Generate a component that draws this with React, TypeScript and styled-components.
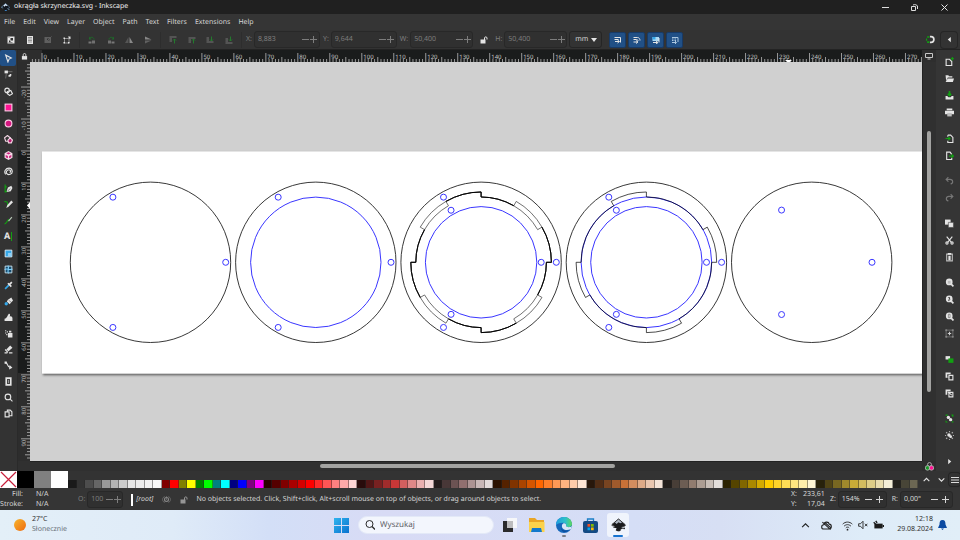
import React, { useEffect, useState } from "react";
import styled, { createGlobalStyle } from "styled-components";

const GlobalStyle = createGlobalStyle`
  *, *::before, *::after { box-sizing: border-box; }
  html, body { margin: 0; height: 100%; overflow: hidden; }
  body {
    font: 7px/10px "Noto Sans", "Open Sans", sans-serif;
    color: #d6d6d6;
    background: #333;
    text-rendering: geometricPrecision;
  }
  button, input, select { font: inherit; color: inherit; margin: 0; padding: 0; border: 0; background: none; text-rendering: inherit; }
  svg { display: block; flex: none; }
`;

/* ---------- icons ---------- */

const W = "#e4e4e4";
const G = "#12a012";
const P = "#ff1493";
const B = "#35a7e8";

const line = (d: string, stroke = W, width = 2) => (
  <path d={d} stroke={stroke} strokeWidth={width} fill="none" />
);
const solid = (d: string, fill = W) => <path d={d} fill={fill} />;

const rotate = (
  <>
    {solid("M2 9h6v6H2z", "#707070")}
    {solid("M9 11h6v4H9z", "#777")}
    {line("M4 7C4 3 9 1 12 4", "#1f6b2a", 2)}
    {solid("M14 1v6H9z", "#1f6b2a")}
  </>
);
const order = (up: boolean, edge: boolean) => (
  <>
    {line(edge ? (up ? "M1 2h14M1 6h5M1 10h5" : "M1 14h14M1 10h5M1 6h5") : up ? "M1 4h14M1 8h5M1 12h5" : "M1 12h14M1 8h5M1 4h5", "#777", 2)}
    {line(up ? "M11 15V6M8 9l3-3 3 3" : "M11 1v9M8 7l3 3 3-3", "#237a2d", 2)}
  </>
);
const zoomBase = (
  <>
    <circle cx="7.5" cy="7" r="6" fill={W} />
    {line("M11 11l4 4", W, 3)}
  </>
);

const icons: Record<string, React.ReactNode> = {
  selectAll: (<>{solid("M1 1h14v14H1z")}{solid("M7 4h5v5H7zM4 8l4 4H4z", "#333")}{line("M3 3h2M3 13h8", "#333", 1)}</>),
  selectLayers: (<>{solid("M2 0h12v16H2z")}{line("M4 3h8M4 6h8M4 9h8M4 12h8", "#444", 1)}</>),
  deselect: (<g opacity="0.25">{solid("M1 2h13v12H1z")}{solid("M6 5h5v4H6z", "#333")}{line("M2 14L15 1")}</g>),
  touch: (<>{line("M3 5h9v9H3z", W, 1)}{solid("M1 3h3v3H1zM1 12h3v3H1zM10 12h3v3h-3z")}{solid("M10 1h5v5h-2z")}</>),
  rotateLeft: <g transform="matrix(-1 0 0 1 16 0)">{rotate}</g>,
  rotateRight: rotate,
  flipH: (<>{solid("M7 2v12H0z", "#555")}{solid("M9 2v12h7z", "#888")}</>),
  flipV: (<>{solid("M2 1v6h13z", "#888")}{solid("M2 9v6l13-6z", "#606060")}</>),
  raiseTop: order(true, true),
  raise: order(true, false),
  lower: order(false, false),
  lowerBottom: order(false, true),
  unlock: (<>{solid("M1 7h10v8H1z")}{line("M9 8V4c0-3 5-3 5 0v3")}</>),
  lock: (<>{solid("M2 7h12v8H2z")}{line("M5 8V4c0-4 6-4 6 0v4")}</>),
  scaleStroke: (<>{line("M1 3h12v10M1 7h8")}{line("M2 11h8M7 8l4 3-4 3")}</>),
  scaleCorner: (<>{line("M1 3h8c3 0 5 3 5 6M1 7h6c2 0 3 1 3 3")}{line("M1 12h7M6 9l4 3-4 3")}</>),
  moveGradient: (<>{solid("M1 2h13v8H1z", "#a9d9f5")}{solid("M1 2h6v5H1z", B)}{line("M2 13h9M8 10l4 3-4 3M14 4v9")}</>),
  movePattern: (<>{line("M2 3h12v9M2 6h3M7 6h3M2 9h3M7 9h3", "#aac6df", 2)}{line("M2 13h8M8 10l3 3-3 3", "#aac6df")}</>),
  snap: (<>{line("M7 3h2a5 5 0 010 10H7", W, 3)}{solid("M2 2h4v3H2zM2 11h4v3H2zM0 6h2v4H0z", G)}</>),
  triLeft: solid("M11 2v12L4 8z"),
  triRight: solid("M5 2v12l7-6z"),
  display: (<>{line("M1 3h14v8H1z", "#c8c8c8", 2)}{solid("M5 13h6v2H5z", "#c8c8c8")}</>),
  arrow: line("M3 2l10 5-4 2-2 5z"),
  node: (<>{solid("M1 1h6v5H1z")}{line("M4 6c0 4-1 6-1 9M7 3h8", "#999", 1)}{solid("M10 7h3v3h-3zM8 9h4v3H8z")}</>),
  builder: (<><circle cx="5.5" cy="6" r="4" fill="none" stroke={W} strokeWidth="2" />{line("M6 8l6-2 3 6-5 3-4-3z")}</>),
  rect: (<rect x="2" y="2" width="12" height="12" fill={P} stroke="#ffc9e5" strokeWidth="2" />),
  ellipse: (<circle cx="8" cy="8" r="6" fill="#d51680" stroke="#ffc9e5" strokeWidth="2" />),
  star: (<>{line("M6 1l5 4-2 6H3L1 5z", "#f3d6e4", 2)}<path d="M7 9l4-4 4 4-2 5H8z" fill="#b81b6f" stroke="#f3d6e4" strokeWidth="2" /></>),
  box3d: (<>{solid("M8 0l7 4v8l-7 4-7-4V4z", "#f6dbe8")}{solid("M8 2l4 2-4 2-4-2zM3 7l4 2v4l-4-2zM13 7L9 9v4l4-2z", "#cc2680")}</>),
  spiral: line("M3 13C-1 8 3 2 9 2s8 9 2 11-9-4-5-7 8 2 4 4", W, 2),
  pen: (<>{line("M2 1v4h3M2 6v8c3 0 5-2 5-5", G, 2)}<path d="M5 12l2-6 6-3 2 4-3 6-7 1z" fill={W} />{line("M6 13l5-5", "#333", 1)}</>),
  pencil: (<>{line("M1 2c2 3 4-1 5 3s1 5 0 7", G, 2)}{solid("M4 14l2-5 7-8 3 3-8 8z")}</>),
  calligraphy: (<>{line("M1 14c4 0 4-6 8-8", G, 2)}{line("M8 9l6-7", "#b9c9b9", 2)}</>),
  gradient: (<><path d="M2 2h12v12H2z" fill={B} stroke="#eaf6fd" strokeWidth="1.5" />{solid("M7 7h6v6H7z", "#8fd0f5")}</>),
  mesh: (<><path d="M2 2h12v12H2z" fill="#164d70" stroke="#d5effb" strokeWidth="1.5" />{line("M7 1c3 5-2 9 1 14M1 8c5-3 9 2 14-1", "#7fd0fa", 2)}</>),
  dropper: (<>{line("M2 14l7-7", B, 3)}{line("M7 4l6 6M9 7l5-5", W, 3)}</>),
  bucket: (<>{solid("M7 5l6-4 3 5-6 7-5-5z")}<circle cx="4" cy="12" r="3" fill={B} />{line("M9 6l4 4", "#333", 1)}</>),
  tweak: solid("M1 14v-4c4 0 5-6 7-8s4 1 2 4c3-1 5 1 5 3v5z"),
  spray: (<>{solid("M7 7h8v8H7zM9 3h4v3H9z")}{solid("M2 2h2v2H2zM5 4h2v2H5zM2 6h2v2H2zM4 9h2v2H4z")}</>),
  eraser: (<>{solid("M4 8l7-7 4 4-7 6z")}{line("M2 8l5 5M1 14h5M9 14h6")}</>),
  connector: (<>{line("M2 3c6-1 2 8 9 8")}{solid("M1 1h4v4H1zM10 7l5 5-6 3z")}</>),
  measure: (<>{line("M4 2h8v12H4z", W, 3)}{line("M8 5v6", W, 1)}</>),
  magnifier: (<><circle cx="7" cy="7" r="5" fill="none" stroke={W} strokeWidth="2" />{line("M11 11l4 4")}</>),
  pages: (<>{line("M2 5h7v9H2z")}{line("M6 5V2h5l3 3v7h-5")}</>),
  docNew: (<>{line("M2 4h6l4 4v7H2z")}{line("M13 0v6M10 3h6", G, 2)}</>),
  open: solid("M1 2h5l1 2h6v2H5l-3 6zM5 8h11l-2 6H1z"),
  save: (<>{solid("M1 9h3l2 2h4l2-2h3v6H1z")}{line("M8 0v7M5 5l3 3 3-3", G, 3)}</>),
  print: (<>{solid("M3 1h10v3H3zM0 5h16v6H0z")}{solid("M4 9h8v6H4z", "#bbb")}</>),
  importDoc: (<>{line("M5 2h5l4 4v9H5v-3M5 2v3")}{line("M1 8h8M6 5l3 3-3 3", G, 2)}</>),
  exportDoc: (<>{line("M12 6L9 2H3v13h9v-3")}{line("M7 9h7M12 6l3 3-3 3", G, 2)}</>),
  undo: line("M6 2L2 6l4 4M2 6h7c6 0 6 7 1 8", "#777", 2),
  redo: line("M10 2l4 4-4 4M14 6H7c-6 0-6 7-1 8", "#777", 2),
  copy: (<>{solid("M0 1h10v9H0z")}<path d="M6 6h9v9H6z" fill={W} stroke="#444" /></>),
  cut: (<>{line("M3 1l8 10M13 1L5 11")}<circle cx="3.5" cy="12.5" r="2" fill="none" stroke={W} strokeWidth="2" /><circle cx="12.5" cy="12.5" r="2" fill="none" stroke={W} strokeWidth="2" /></>),
  paste: (<>{line("M3 2h10v12H3z", "#bbb", 2)}{solid("M5 0h6v3H5zM6 5h4v8H6z")}</>),
  zoomSel: (<>{zoomBase}{solid("M5 5h5v5H5z", "#bbb")}</>),
  zoomDraw: (<>{zoomBase}{solid("M5 4h4v4zM6 8h4l-4 3z", "#333")}</>),
  zoomPage: (<>{zoomBase}{line("M6 4h3v6H6z", "#555", 1)}</>),
  zoomCenter: (<>{line("M2 2h12v12H2z", "#999", 1)}{line("M8 5v6M5 8h6", "#ccc", 2)}{line("M0 2h4M2 0v4M12 2h4M14 0v4M0 14h4M2 12v4M12 14h4M14 12v4", "#999", 1)}</>),
  duplicate: (<>{solid("M1 2h8v6H1z")}{solid("M6 6h9v8H6z", G)}</>),
  clone: (<>{solid("M1 1h9v3H4v6H1z")}{line("M7 6h7v8H7z")}{line("M3 9h5", W, 1)}</>),
  unlinkClone: (<>{solid("M1 1h9v3H4v6H1z")}{line("M7 6h7v8H7z")}{line("M5 5l7 6", W, 2)}</>),
  group: (<>{solid("M1 1h4v2H1zM11 1h4v4h-2zM1 11l4 4H1zM12 13h3v2h-3z", G)}<circle cx="6" cy="6" r="3" fill={W} /><circle cx="10" cy="10" r="3" fill={W} /></>),
  ungroup: (<>{line("M2 2l2 2M14 2l-2 2M2 14l2-2M14 14l-2-2M8 0v2M8 14v2M0 8h2M14 8h2", "#aaa", 2)}<circle cx="7" cy="7" r="3" fill={W} /><circle cx="10" cy="10" r="2.5" fill={W} /></>),
  cms: (<><circle cx="8" cy="4.5" r="3.5" fill="none" stroke="#bbb" strokeWidth="1.5" /><circle cx="4.5" cy="10.5" r="4" fill="#179b28" stroke="#bbb" strokeWidth="1.5" /><circle cx="11.5" cy="10.5" r="4" fill={P} stroke="#bbb" strokeWidth="1.5" /></>),
  eye: (<><circle cx="8" cy="8" r="3.5" fill="none" stroke="#888" strokeWidth="2" />{line("M1 8c0-3 2-5 4-5M15 8c0-3-2-5-4-5M1 8c0 3 2 5 4 5M15 8c0 3-2 5-4 5M8 2v7", "#888", 1)}</>),
  chevUp: line("M3 11l5-5 5 5"),
  chevDown: line("M3 6l5 5 5-5"),
  burger: line("M0 3h16M0 8h16M0 13h16", "#ddd", 2),
};

const Icon = ({ name, size = 9 }: { name: string; size?: number }) => (
  <svg width={size} height={size} viewBox="0 0 16 16" aria-hidden="true">{icons[name]}</svg>
);

/* ---------- shared parts ---------- */

const Spacer = styled.div`flex: 1;`;

const IconButton = styled.button<{ $w?: number; $h?: number; $framed?: boolean }>`
  display: flex;
  align-items: center;
  justify-content: center;
  flex: none;
  width: ${(p) => p.$w ?? 16}px;
  height: ${(p) => p.$h ?? 16}px;
  border-radius: 3px;
  box-shadow: ${(p) => (p.$framed ? "0 0 0 1px #262626" : "none")};
`;

/* ---------- window chrome ---------- */

const AppWindow = styled.div`
  display: flex;
  flex-direction: column;
  height: 100vh;
`;

const TitleBar = styled.header`
  display: flex;
  align-items: center;
  height: 14px;
  padding-left: 1px;
  background: #202020;
  color: #f2f2f2;
`;

const Title = styled.h1`
  flex: 1;
  margin: 0 0 0 4px;
  font-size: 7px;
  font-weight: 400;
`;

const MenuBar = styled.nav`
  display: flex;
  align-items: center;
  gap: 8px;
  height: 16px;
  padding: 1px 0 0 4px;
  background: #353535;
`;

const MenuItem = styled.button`white-space: nowrap;`;

const ToolBar = styled.div`
  display: flex;
  align-items: center;
  height: 20px;
  padding: 0 3px 0 3px;
  background: #333;
  border-bottom: 1px solid #232323;
`;

const ToolGroup = styled.div`
  display: flex;
  justify-content: space-between;
  flex: none;
  width: 77px;
  padding-right: 4px;
  margin-right: 4px;
  border-right: 1px solid #2d2d2d;
`;

const Field = styled.label<{ $dim?: boolean }>`
  display: flex;
  align-items: center;
  flex: none;
  gap: 2px;
  color: ${(p) => (p.$dim ? "#7d7d7d" : "#d6d6d6")};
`;

const SpinBox = styled.span<{ $w: number }>`
  display: flex;
  align-items: center;
  width: ${(p) => p.$w}px;
  height: 17px;
  padding: 0 1px 0 3px;
  border: 1px solid #282828;
  border-radius: 3px;
  background: #303030;
`;

const SpinInput = styled.input`
  flex: 1;
  min-width: 0;
  width: 0;
  outline: none;
`;

const Step = styled.button<{ $w: number }>`
  display: flex;
  align-items: center;
  justify-content: center;
  width: ${(p) => p.$w}px;
  height: 14px;
`;

const FieldGap = styled.div<{ $w: number }>`width: ${(p) => p.$w}px; flex: none;`;

const UnitSelect = styled.span`
  display: flex;
  align-items: center;
  gap: 1px;
  width: 33px;
  height: 17px;
  padding-left: 5px;
  margin-right: 7px;
  border: 1px solid #252525;
  border-radius: 3px;
  select { appearance: none; width: 15px; outline: none; }
`;

const Toggle = styled.button`
  display: flex;
  align-items: center;
  justify-content: center;
  width: 17px;
  height: 16px;
  margin-right: 2px;
  border-radius: 2px;
  border: 1px solid #183a66;
  background: #215086;
`;

function Spin({ label, value, width, dim }: { label: string; value: string; width: number; dim?: boolean }) {
  const step = dim ? 8 : 11;
  return (
    <Field $dim={dim}>
      {label}
      <SpinBox $w={width}>
        <SpinInput defaultValue={value} aria-label={label} />
        <Step $w={step} aria-label="Decrease"><svg width="7" height="7" viewBox="0 0 7 7"><path d="M0 3.5h7" stroke="currentColor" /></svg></Step>
        <Step $w={step} aria-label="Increase"><svg width="7" height="7" viewBox="0 0 7 7"><path d="M0 3.5h7M3.5 0v7" stroke="currentColor" /></svg></Step>
      </SpinBox>
    </Field>
  );
}

/* ---------- work area ---------- */

const WorkArea = styled.main`
  display: grid;
  grid-template-columns: 18px 12px minmax(0, 1fr) 14px 24px;
  grid-template-rows: 12px minmax(0, 1fr) 10px;
  flex: 1;
  min-height: 0;
  background: #303030;
`;

const ToolBox = styled.div`
  grid-column: 1;
  grid-row: 1 / -1;
  display: flex;
  flex-direction: column;
  gap: 1px;
  background: #333;
  border-right: 1px solid #2a2a2a;
`;

const ToolSet = styled.div`
  display: flex;
  flex-direction: column;
`;

const Tool = styled.button<{ $active?: boolean }>`
  display: flex;
  align-items: center;
  justify-content: center;
  width: 16px;
  height: 16px;
  border-radius: 2px;
  background: ${(p) => (p.$active ? "#215086" : "none")};
`;

const TextGlyph = styled.span`
  font-size: 9px;
  line-height: 14px;
  font-weight: 700;
  color: ${W};
`;

const TextCaret = styled.span`
  width: 1px;
  height: 9px;
  margin-left: 1px;
  background: ${G};
`;

const Corner = styled.button<{ $col: number; $row: number }>`
  grid-column: ${(p) => p.$col};
  grid-row: ${(p) => p.$row};
  display: flex;
  align-items: center;
  justify-content: center;
  background: #2e2e2e;
  border-radius: 2px;
`;

const RulerH = styled.div`
  grid-column: 3;
  grid-row: 1;
  overflow: hidden;
  background: linear-gradient(to right, #2d2d2d 12px, #1a1c1c 12px);
`;

const RulerV = styled.div`
  grid-column: 2;
  grid-row: 2;
  overflow: hidden;
  background: linear-gradient(to bottom, #2d2d2d 89px, #1a1c1c 89px, #1a1c1c 311px, #2d2d2d 311px);
`;

const Canvas = styled.div`
  grid-column: 3;
  grid-row: 2;
  overflow: hidden;
  background: #d0d0d0;
`;

const ScrollV = styled.div`
  grid-column: 4;
  grid-row: 2;
  display: flex;
  flex-direction: column;
  align-items: center;
  padding: 69px 2px 0 0;
  border-left: 1px solid #222;
`;

const ScrollH = styled.div`
  grid-column: 3;
  grid-row: 3;
  padding: 2px 0 0 290px;
  border-top: 1px solid #222;
`;

const Thumb = styled.div<{ $w: string; $h: string }>`
  width: ${(p) => p.$w};
  height: ${(p) => p.$h};
  border-radius: 2px;
  background: #a3a3a1;
`;

const CommandBar = styled.div`
  grid-column: 5;
  grid-row: 1 / -1;
  display: flex;
  flex-direction: column;
  justify-content: space-between;
  align-items: center;
  padding: 3px 0 1px 2px;
  background: #353535;
`;

const Commands = styled.div`
  display: flex;
  flex-direction: column;
`;

const SCALE = 3.198;
const ORIGIN_X = 12;
const ORIGIN_Y = 89;
const tickFill = "#a8a8a8";

const tickLength = (i: number) => (i % 10 === 0 ? 9 : i % 5 === 0 ? 5 : 3);

function useWindowSize() {
  const read = () => ({ width: window.innerWidth, height: window.innerHeight });
  const [size, setSize] = useState(read);
  useEffect(() => {
    const update = () => setSize(read());
    window.addEventListener("resize", update);
    return () => window.removeEventListener("resize", update);
  }, []);
  return size;
}

const range = (from: number, to: number) => Array.from({ length: Math.max(0, to - from + 1) }, (_, k) => from + k);

function HorizontalTicks({ length }: { length: number }) {
  return (
    <svg width="100%" height="12">
      {range(-3, Math.floor((length - ORIGIN_X) / SCALE)).map((i) => {
        const x = ORIGIN_X + i * SCALE;
        return (
          <g key={i}>
            <path d={`M${x} 12V${12 - tickLength(i)}`} stroke={tickFill} strokeWidth="0.9" />
            {i % 10 === 0 && x + 14 < length && <text x={x + 1.5} y="9" fontSize="6" fill="#c4c4c4">{i}</text>}
          </g>
        );
      })}
      <path d="M755 10h7l-3.500 3z" fill="#fff" />
    </svg>
  );
}

function VerticalTicks({ length }: { length: number }) {
  return (
    <svg width="12" height="100%">
      {range(-27, Math.floor((length - ORIGIN_Y) / SCALE)).map((i) => {
        const y = ORIGIN_Y + i * SCALE;
        const end = y + 1 + String(i).length * 3.4;
        return (
          <g key={i}>
            <path d={`M12 ${y}H${12 - tickLength(i)}`} stroke={tickFill} strokeWidth="0.9" />
            {i % 10 === 0 && end < length && (
              <text transform={`translate(8 ${end}) rotate(-90)`} fontSize="6" fill="#b4b4b4">{i}</text>
            )}
          </g>
        );
      })}
      <path d="M9 140v7l3-3.500z" transform="matrix(-1 0 0 1 21 0)" fill="#fff" />
    </svg>
  );
}

/* ---------- drawing ---------- */

const OUT = 70.3;
const IN = 65.3;

const at = (r: number, deg: number) => {
  const a = (deg * Math.PI) / 180;
  return `${(r * Math.cos(a)).toFixed(2)} ${(r * Math.sin(a)).toFixed(2)}`;
};
const arc = (r: number, to: number) => `A${r} ${r} 0 0 1 ${at(r, to)}`;

/* Bayonet ring: each quadrant runs on the inner radius, then steps out for the lug. */
const ringPath = (lugStart: number) =>
  [0, 90, 180, 270]
    .map((q, n) => `${n ? "L" : "M"}${at(IN, q)} ${arc(IN, q + lugStart)} L${at(OUT, q + lugStart)} ${arc(OUT, q + 90)}`)
    .join(" ") + "Z";

const sharedPath = [0, 90, 180, 270]
  .map((q) => `M${at(OUT, q - 30)} ${arc(OUT, q)} L${at(IN, q)} ${arc(IN, q + 30)}`)
  .join(" ");

const BLUE = "#3a36ff";

const Ring = ({ r }: { r: number }) => <circle r={r} fill="none" stroke={BLUE} strokeWidth="1" />;

const Holes = ({ r }: { r: number }) => (
  <>
    {[0, 120, 240].map((a) => (
      <g key={a} transform={`translate(${at(r, a)})`}>
        <circle r="3" fill="none" stroke={BLUE} strokeWidth="1" />
      </g>
    ))}
  </>
);

const Disc = ({ x, children }: { x: number; children: React.ReactNode }) => (
  <g transform={`translate(${x} 200.300)`}>
    <circle r="80.200" fill="none" stroke="#222" strokeWidth="0.9" />
    {children}
  </g>
);

function Drawing() {
  return (
    <svg width="100%" height="100%" role="img" aria-label="Round box parts">
      <defs>
        <filter id="pageShadow" x="-5%" y="-5%" width="110%" height="115%">
          <feDropShadow dx="1" dy="1.500" stdDeviation="1.200" floodColor="#000" floodOpacity="0.6" />
        </filter>
      </defs>
      <rect x="12" y="89.500" width="4000" height="222" fill="#fff" filter="url(#pageShadow)" />
      <Disc x={120.5}><Holes r={75.2} /></Disc>
      <Disc x={285.8}><Ring r={65.2} /><Holes r={75.2} /></Disc>
      <Disc x={451.1}>
        <Ring r={55.7} />
        <Holes r={75.2} />
        <Holes r={60.1} />
        <path d={ringPath(30)} fill="none" stroke="#333" strokeWidth="0.7" />
        <path d={ringPath(60)} fill="none" stroke="#333" strokeWidth="0.7" />
        <path d={sharedPath} fill="none" stroke="#000" strokeWidth="1" />
      </Disc>
      <Disc x={616.4}>
        <Ring r={IN} />
        <path d={ringPath(60)} fill="none" stroke="#000" strokeWidth="0.7" />
        <Ring r={55.7} />
        <Holes r={75.2} />
        <Holes r={60.1} />
      </Disc>
      <Disc x={781.7}><Holes r={60.3} /></Disc>
    </svg>
  );
}

/* ---------- palette and status ---------- */

const PaletteBar = styled.div`
  display: flex;
  align-items: flex-end;
  height: 17px;
  background: #333;
`;

const BigSwatch = styled.button<{ $c: string }>`
  width: 17px;
  height: 17px;
  flex: none;
  background: ${(p) => p.$c};
`;

const SwatchRow = styled.div`
  display: flex;
  flex: 1;
  height: 8px;
`;

const Swatch = styled.button<{ $c: string }>`
  flex: 1;
  min-width: 0;
  background: ${(p) => p.$c};
  border-right: 1px solid rgba(40, 40, 40, 0.45);
`;

const PaletteTools = styled.div`
  display: flex;
  align-items: center;
  height: 17px;
`;

const palette = (
  "1a1a1a 333333 4d4d4d 666666 999999 b3b3b3 cccccc e6e6e6 ececec f2f2f2 f9f9f9 " +
  "800000 ff0000 808000 ffff00 008000 00ff00 008080 00ffff 000080 0000ff 800080 ff00ff " +
  "2b0000 550000 800000 aa0000 d40000 ff0000 ff2a2a ff5555 ff8080 ffaaaa ffd5d5 " +
  "280b0b 501616 782121 a02c2c c83737 d35f5f de8787 e9afaf f4d7d7 " +
  "241c1c 483737 6c5353 916f6f ac9393 c8b7b7 e3dbdb " +
  "2b1100 552200 803300 aa4400 d45500 ff6600 ff7f2a ff9955 ffb380 ffccaa ffe6d5 " +
  "28170b 502d16 784421 a05a2c c87137 d38d5f deaa87 e9c6af f4e3d7 " +
  "241f1c 483e37 6c5d53 917c6f ac9d93 c8beb7 e3dedb " +
  "2b2200 554400 806600 aa8800 d4aa00 ffcc00 ffd42a ffdd55 ffe680 ffeeaa fff6d5 " +
  "28220b 504416 786721 a0892c c8ab37 d3bc5f decd87 e9ddaf f4eed7 24221c 484537 6c6753"
).split(" ");

const StatusBar = styled.footer`
  display: flex;
  align-items: center;
  height: 22px;
  padding: 1px 7px 0 0;
  background: #353535;
`;

const Pairs = styled.dl<{ $w: number; $label: number; $right?: boolean }>`
  display: grid;
  grid-template-columns: ${(p) => p.$label}px 1fr;
  column-gap: ${(p) => (p.$right ? 0 : 13)}px;
  width: ${(p) => p.$w}px;
  flex: none;
  margin: 0;
  white-space: nowrap;
  dt { text-align: ${(p) => (p.$right ? "left" : "right")}; }
  dd { margin: 0; text-align: ${(p) => (p.$right ? "right" : "left")}; }
`;

const LayerName = styled.button`
  height: 12px;
  margin: 0 4px 0 8px;
  padding-left: 3px;
  border-left: 2px solid #fff;
  font-style: italic;
`;

const Message = styled.p`
  flex: 1;
  margin: 0 0 0 3px;
  white-space: nowrap;
  overflow: hidden;
`;

/* ---------- desktop task bar ---------- */

const TaskBar = styled.div`
  display: grid;
  grid-template-columns: 1fr auto 1fr;
  align-items: center;
  height: 30px;
  color: #333;
  background: linear-gradient(to right, #e3eff8 0%, #dfebf8 18%, #d3dff7 28%, #d8dbf5 40%, #d5def6 66%, #d7dff4 75%, #deecf8 90%, #e1eef8 100%);
`;

const Weather = styled.button`
  display: flex;
  align-items: center;
  gap: 6px;
  padding-left: 14px;
  text-align: left;
  justify-self: start;
`;

const Muted = styled.span`display: block; color: #6a7178;`;

const Pinned = styled.div`
  display: flex;
  align-items: center;
  height: 30px;
`;

const SearchBox = styled.label`
  display: flex;
  align-items: center;
  gap: 5px;
  width: 136px;
  height: 18px;
  margin: 0 2px 0 6px;
  padding-left: 6px;
  border-radius: 9px;
  background: #f3f6fd;
  border: 1px solid #e3e9f7;
  input { width: 100px; font-size: 8px; outline: none; }
  input::placeholder { color: #5d6066; opacity: 1; }
`;

const StartButton = styled.button`
  display: flex;
  align-items: center;
  justify-content: center;
  width: 21px;
  height: 24px;
`;

const TaskButton = styled.button<{ $active?: boolean; $mark?: string }>`
  position: relative;
  display: flex;
  align-items: center;
  justify-content: center;
  width: ${(p) => (p.$active ? 22 : 27)}px;
  height: 24px;
  border-radius: 3px;
  background: ${(p) => (p.$active ? "#f0f4fc" : "none")};
  &::after {
    content: "";
    display: ${(p) => (p.$mark ? "block" : "none")};
    position: absolute;
    bottom: 0;
    width: ${(p) => (p.$active ? 10 : 4)}px;
    height: 2px;
    border-radius: 1px;
    background: ${(p) => p.$mark ?? "none"};
  }
`;

const Tray = styled.div`
  display: flex;
  align-items: center;
  justify-self: end;
  gap: 5px;
  padding-right: 13px;
`;

const Clock = styled.div`
  width: 44px;
  text-align: right;
`;

const InkscapeLogo = ({ size, dark }: { size: number; dark?: boolean }) => (
  <svg width={size} height={size} viewBox="0 0 16 16" aria-hidden="true">
    <path d="M8 1l7 6c1 2-2 2-4 3l3 1-4 1c0 2-3 3-5 1l1-2-4-1 2-1C2 8 0 8 1 7z" fill={dark ? "#1b1b1d" : "#11161e"} />
    <path d="M8 1l4 3.500-2 1-2-1-2 2-2-2z" fill={dark ? "#aeb6c2" : "#dcebfa"} />
    <path d="M8 1l7 6c1 2-2 2-4 3M1 7l7-6" stroke={dark ? "#333" : "#6c93bb"} strokeWidth="1" fill="none" />
    <path d="M2 6l-1 2 3 1" stroke={dark ? "#444" : "#8fbbe4"} strokeWidth="1" fill="none" />
    <circle cx="14" cy="11" r="1" fill={dark ? "#222" : "#8fbbe4"} />
    <path d="M6 12c2 1 3 0 5 0-1 3-4 3-5 0z" fill={dark ? "#222" : "#3f88cc"} />
  </svg>
);

const menus = ["File", "Edit", "View", "Layer", "Object", "Path", "Text", "Filters", "Extensions", "Help"];

const toolbarGroups = [
  ["selectAll", "selectLayers", "deselect", "touch"],
  ["rotateLeft", "rotateRight", "flipH", "flipV"],
  ["raiseTop", "raise", "lower", "lowerBottom"],
];

const toolSets = [
  ["arrow", "node"],
  ["builder", "rect", "ellipse", "star", "box3d", "spiral"],
  ["pen", "pencil", "calligraphy", "text"],
  ["gradient", "mesh", "dropper", "bucket", "tweak", "spray", "eraser", "connector", "measure", "magnifier", "pages"],
];

const commandSets = [
  ["docNew", "open", "save", "print"],
  ["importDoc", "exportDoc"],
  ["undo", "redo"],
  ["copy", "cut", "paste"],
  ["zoomSel", "zoomDraw", "zoomPage", "zoomCenter"],
  ["duplicate", "clone", "unlinkClone"],
  ["group", "ungroup"],
  ["triRight"],
];

export default function App() {
  const { width, height } = useWindowSize();
  return (
    <AppWindow>
      <GlobalStyle />
      <TitleBar>
        <InkscapeLogo size={9} />
        <Title>okrągła skrzyneczka.svg - Inkscape</Title>
        <IconButton $w={29} $h={14} aria-label="Minimize"><svg width="7" height="7" viewBox="0 0 7 7"><path d="M0 3.500h7" stroke="#ddd" /></svg></IconButton>
        <IconButton $w={29} $h={14} aria-label="Restore"><svg width="7" height="7" viewBox="0 0 7 7"><path d="M.5 2.500h4v4h-4zM2 1c2-1 4 0 4.500 1v3" stroke="#ddd" fill="none" /></svg></IconButton>
        <IconButton $w={31} $h={14} aria-label="Close"><svg width="7" height="7" viewBox="0 0 7 7"><path d="M.5.5l6 6M6.500.5l-6 6" stroke="#e6e6e6" /></svg></IconButton>
      </TitleBar>

      <MenuBar>{menus.map((m) => <MenuItem key={m}>{m}</MenuItem>)}</MenuBar>

      <ToolBar>
        {toolbarGroups.map((g) => (
          <ToolGroup key={g[0]}>
            {g.map((n) => <IconButton key={n} aria-label={n}><Icon name={n} size={8} /></IconButton>)}
          </ToolGroup>
        ))}
        <Spin dim label="X:" value="8,883" width={66} />
        <FieldGap $w={3} />
        <Spin dim label="Y:" value="9,644" width={66} />
        <FieldGap $w={3} />
        <Spin dim label="W:" value="50,400" width={63} />
        <FieldGap $w={3} />
        <IconButton aria-label="Lock ratio"><Icon name="unlock" size={8} /></IconButton>
        <FieldGap $w={3} />
        <Spin dim label="H:" value="50,400" width={63} />
        <FieldGap $w={2} />
        <UnitSelect>
          <select aria-label="Units" defaultValue="mm"><option>mm</option></select>
          <svg width="6" height="4" viewBox="0 0 6 4"><path d="M0 0h6L3 4z" fill="#e4e4e4" /></svg>
        </UnitSelect>
        {["scaleStroke", "scaleCorner", "moveGradient", "movePattern"].map((n) => (
          <Toggle key={n} aria-label={n} aria-pressed="true"><Icon name={n} size={8} /></Toggle>
        ))}
        <Spacer />
        <IconButton aria-label="Snapping"><Icon name="snap" size={9} /></IconButton>
        <FieldGap $w={3} />
        <IconButton $framed aria-label="Collapse"><Icon name="triLeft" size={7} /></IconButton>
      </ToolBar>

      <WorkArea>
        <ToolBox>
          {toolSets.map((set) => (
            <ToolSet key={set[0]}>
              {set.map((n) => (
                <Tool key={n} $active={n === "arrow"} aria-label={n}>
                  {n === "text" ? <><TextGlyph>A</TextGlyph><TextCaret /></> : <Icon name={n} size={9} />}
                </Tool>
              ))}
            </ToolSet>
          ))}
        </ToolBox>
        <Corner $col={2} $row={1} aria-label="Lock guides"><Icon name="lock" size={7} /></Corner>
        <RulerH><HorizontalTicks length={width - 68} /></RulerH>
        <Corner $col={4} $row={1} aria-label="Display mode"><Icon name="display" size={8} /></Corner>
        <RulerV><VerticalTicks length={height - 141} /></RulerV>
        <Canvas><Drawing /></Canvas>
        <ScrollV><Thumb $w="4px" $h="79%" /></ScrollV>
        <ScrollH><Thumb $w="49%" $h="4px" /></ScrollH>
        <Corner $col={4} $row={3} aria-label="Color management"><Icon name="cms" size={9} /></Corner>
        <CommandBar>
          {commandSets.map((set) => (
            <Commands key={set[0]}>
              {set.map((n) => (
                <IconButton key={n} $h={17} aria-label={n}><Icon name={n} size={n === "triRight" ? 7 : 9} /></IconButton>
              ))}
            </Commands>
          ))}
        </CommandBar>
      </WorkArea>

      <PaletteBar>
        <BigSwatch $c="#fff" aria-label="None">
          <svg width="17" height="17" viewBox="0 0 17 17"><path d="M1 1l15 15M16 1L1 16" stroke="#c8203c" strokeWidth="1.200" /></svg>
        </BigSwatch>
        <BigSwatch $c="#000" aria-label="Black" />
        <BigSwatch $c="#808080" aria-label="Gray" />
        <BigSwatch $c="#fff" aria-label="White" />
        <SwatchRow>{palette.map((c, i) => <Swatch key={i} $c={`#${c}`} aria-label={`#${c}`} />)}</SwatchRow>
        <PaletteTools>
          <IconButton $w={16} aria-label="Previous"><Icon name="chevUp" size={9} /></IconButton>
          <IconButton $w={15} aria-label="Next"><Icon name="chevDown" size={9} /></IconButton>
          <IconButton $w={11} $h={13} $framed aria-label="Palette menu"><Icon name="burger" size={8} /></IconButton>
        </PaletteTools>
      </PaletteBar>

      <StatusBar>
        <Pairs $w={78} $label={23}><dt>Fill:</dt><dd>N/A</dd><dt>Stroke:</dt><dd>N/A</dd></Pairs>
        <Spin dim label="O:" value="100" width={36} />
        <LayerName>[root]</LayerName>
        <IconButton $w={18} aria-label="Layer visibility"><Icon name="eye" size={9} /></IconButton>
        <IconButton $w={18} aria-label="Layer lock"><svg width="8" height="8" viewBox="0 0 16 16" opacity="0.55">{icons.unlock}</svg></IconButton>
        <Message>No objects selected. Click, Shift+click, Alt+scroll mouse on top of objects, or drag around objects to select.</Message>
        <Pairs $right $w={34} $label={8}><dt>X:</dt><dd>233,61</dd><dt>Y:</dt><dd>17,04</dd></Pairs>
        <FieldGap $w={5} />
        <Spin label="Z:" value="154%" width={49} />
        <FieldGap $w={5} />
        <Spin label="R:" value="0,00°" width={53} />
      </StatusBar>

      <TaskBar>
        <Weather>
          <svg width="12" height="12" viewBox="0 0 12 12">
            <defs><linearGradient id="sun" x1="0" y1="0" x2="1" y2="1"><stop offset="0" stopColor="#f7b52c" /><stop offset="1" stopColor="#ee6a10" /></linearGradient></defs>
            <circle cx="6" cy="6" r="6" fill="url(#sun)" />
          </svg>
          <span>27°C<Muted>Słonecznie</Muted></span>
        </Weather>
        <Pinned>
          <StartButton aria-label="Start">
            <svg width="15" height="15" viewBox="0 0 15 15">
              <defs><linearGradient id="win" x1="0" y1="0" x2="1" y2="1"><stop offset="0" stopColor="#2fb4ee" /><stop offset="1" stopColor="#0a72cf" /></linearGradient></defs>
              <path d="M0 0h7v7H0zM8 0h7v7H8zM0 8h7v7H0zM8 8h7v7H8z" fill="url(#win)" />
            </svg>
          </StartButton>
          <SearchBox>
            <svg width="10" height="10" viewBox="0 0 10 10"><circle cx="4.500" cy="4" r="3.500" fill="none" stroke="#2b2b2b" /><path d="M7 6.500l3 3" stroke="#2b2b2b" strokeWidth="1.300" /></svg>
            <input placeholder="Wyszukaj" aria-label="Wyszukaj" />
          </SearchBox>
          <TaskButton aria-label="Task view">
            <svg width="14" height="14" viewBox="0 0 14 14"><path d="M0 3h10v11H0z" fill="#2a2a2c" /><path d="M4 0h10v10H4z" fill="#fafafa" opacity="0.9" /><path d="M4 3h6v7H4z" fill="#bcbcbe" /></svg>
          </TaskButton>
          <TaskButton aria-label="File Explorer">
            <svg width="16" height="14" viewBox="0 0 16 14"><path d="M0 0h6l2 2h7v5H0z" fill="#e9a526" /><path d="M0 4h15.500v10H0z" fill="#fbd24b" /><path d="M3 10h9l1 4H2z" fill="#1379cc" /></svg>
          </TaskButton>
          <TaskButton $mark="#7b7f88" aria-label="Edge">
            <svg width="16" height="16" viewBox="0 0 16 16">
              <defs><linearGradient id="edge" x1="0" y1="0" x2="1" y2="0"><stop offset="0" stopColor="#1f9de0" /><stop offset="0.600" stopColor="#2fc1c8" /><stop offset="1" stopColor="#5fd85a" /></linearGradient></defs>
              <circle cx="8" cy="8" r="8" fill="#1668bb" />
              <path d="M0 8C0-2 15-3 16 7c0 4-6 4-6 2 1-3-2-4-5-3-3 0-5 2-5 2z" fill="url(#edge)" />
              <path d="M6 8c-1 5 5 6 9 4l1-3c-2 2-6 1-6 0 1-3-3-4-4-1z" fill="#d9e6f7" />
              <path d="M5 8c-1 4 3 7 8 5-4 4-9 2-8-5z" fill="#0d4c9c" />
            </svg>
          </TaskButton>
          <TaskButton aria-label="Microsoft Store">
            <svg width="15" height="15" viewBox="0 0 15 15"><path d="M4.500 4V1h6v3" stroke="#1b7fc6" strokeWidth="1.300" fill="none" /><rect y="3" width="15" height="12" rx="2" fill="#144a83" /><path d="M4.500 6h2.700v2.700H4.500z" fill="#f25022" /><path d="M8 6h2.700v2.700H8z" fill="#7fba00" /><path d="M4.500 9.500h2.700v2.700H4.500z" fill="#00a4ef" /><path d="M8 9.500h2.700v2.700H8z" fill="#ffb900" /></svg>
          </TaskButton>
          <FieldGap $w={3} />
          <TaskButton $active $mark="#1673d0" aria-label="Inkscape"><InkscapeLogo size={15} dark /></TaskButton>
        </Pinned>
        <Tray>
          <svg width="9" height="9" viewBox="0 0 16 16"><path d="M2 11l6-6 6 6" stroke="#222" strokeWidth="2" fill="none" /></svg>
          <FieldGap $w={1} />
          <svg width="11" height="11" viewBox="0 0 16 16"><path d="M4 13c-4 0-4-6 0-6 1-5 7-5 8-1 4 0 4 7 0 7zM2 3l12 11M6 4l8 7" stroke="#222" strokeWidth="1.600" fill="none" /></svg>
          <FieldGap $w={0} />
          <svg width="11" height="11" viewBox="0 0 16 16"><path d="M1 6c4-4 10-4 14 0M3 9c3-3 7-3 10 0M5.500 11.500c1-1.500 4-1.500 5 0" stroke="#222" strokeWidth="1.300" fill="none" /><circle cx="8" cy="14" r="1.300" fill="#222" /></svg>
          <svg width="10" height="10" viewBox="0 0 16 16"><path d="M1 6h3l4-4v12l-4-4H1zM11 6l4 4M15 6l-4 4" stroke="#222" strokeWidth="1.400" fill="none" /></svg>
          <svg width="11" height="10" viewBox="0 0 16 14"><path d="M2 5h12v7H2z" fill="#1c1c1c" /><path d="M15 7v3M1 3l3 3M4 1l2 3" stroke="#1c1c1c" strokeWidth="2" /></svg>
          <Clock>12:18<br />29.08.2024</Clock>
          <svg width="9" height="10" viewBox="0 0 9 10"><path d="M4.500 0C7 0 7.500 2 7.500 4.500L9 8H0l1.500-3.500C1.500 2 2 0 4.500 0zM3 8.500h3L4.500 10z" fill="#0b4aa2" /></svg>
        </Tray>
      </TaskBar>
    </AppWindow>
  );
}
